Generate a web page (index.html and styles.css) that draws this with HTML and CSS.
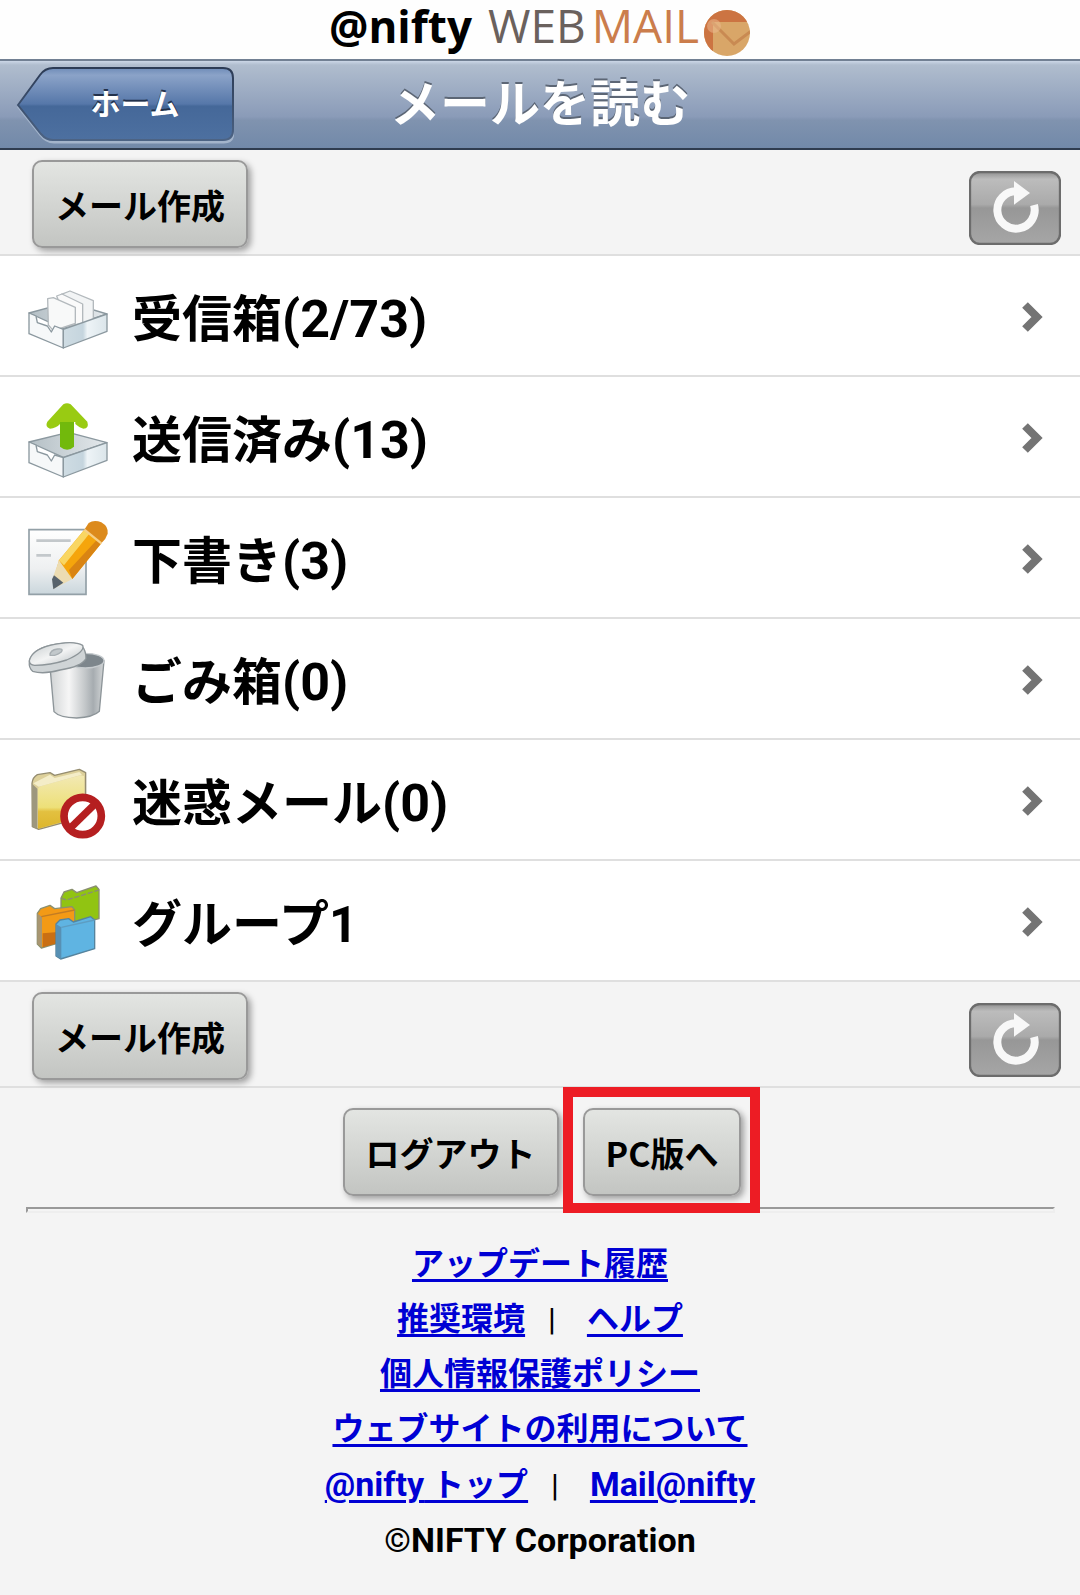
FILE: index.html
```html
<!DOCTYPE html>
<html lang="ja">
<head>
<meta charset="utf-8">
<meta name="viewport" content="width=device-width, initial-scale=1">
<title>メールを読む - @nifty WEBMAIL</title>
<link rel="stylesheet" href="styles.css">
</head>
<body>
<svg class="defs" aria-hidden="true">
  <defs>
    <linearGradient id="home-fill" x1="0" y1="0" x2="0" y2="1">
      <stop offset="0" stop-color="#6f8cb8"/><stop offset=".1" stop-color="#8ba3c8"/><stop offset=".5" stop-color="#5677a9"/><stop offset=".53" stop-color="#456899"/><stop offset="1" stop-color="#4d70a0"/>
    </linearGradient>
    <linearGradient id="home-line" x1="0" y1="0" x2="0" y2="1">
      <stop offset="0" stop-color="#2c3b55"/><stop offset="1" stop-color="#4c6384"/>
    </linearGradient>
    <linearGradient id="tray-side" x1="0" y1="0" x2="1" y2="0">
      <stop offset="0" stop-color="#cfdce3"/><stop offset=".45" stop-color="#c5d5de"/><stop offset=".55" stop-color="#eef4f7"/><stop offset="1" stop-color="#dbe5ea"/>
    </linearGradient>
    <linearGradient id="tray-in" x1="0" y1="0" x2="1" y2="0">
      <stop offset="0" stop-color="#b4bfc5"/><stop offset="1" stop-color="#e4e9ec"/>
    </linearGradient>
    <linearGradient id="sheet" x1="0" y1="0" x2="0" y2="1">
      <stop offset="0" stop-color="#fff"/><stop offset=".6" stop-color="#eef0f1"/><stop offset="1" stop-color="#cad6dc"/>
    </linearGradient>
    <linearGradient id="can" x1="0" y1="0" x2="1" y2="0">
      <stop offset="0" stop-color="#d0d3d4"/><stop offset=".35" stop-color="#f6f6f6"/><stop offset=".65" stop-color="#c3c7c9"/><stop offset=".8" stop-color="#a6acb0"/><stop offset="1" stop-color="#d4d7d8"/>
    </linearGradient>
    <linearGradient id="lid" x1="0" y1="0" x2="1" y2="1">
      <stop offset="0" stop-color="#c4cacc"/><stop offset=".5" stop-color="#f3f4f4"/><stop offset="1" stop-color="#b5bcc0"/>
    </linearGradient>
    <linearGradient id="folder" x1="0" y1="0" x2="0" y2="1">
      <stop offset="0" stop-color="#f2e9b4"/><stop offset=".6" stop-color="#ede078"/><stop offset=".68" stop-color="#e3c040"/><stop offset="1" stop-color="#ddb62c"/>
    </linearGradient>
    <linearGradient id="reload-fill" x1="0" y1="0" x2="0" y2="1">
      <stop offset="0" stop-color="#909090"/><stop offset=".1" stop-color="#bcbcbc"/><stop offset=".45" stop-color="#aaa"/><stop offset=".5" stop-color="#979797"/><stop offset="1" stop-color="#a6a6a6"/>
    </linearGradient>
    <symbol id="chevron" viewBox="0 0 22 34">
      <path d="M3 6 15 18 3 30" fill="none" stroke="#747474" stroke-width="8"/>
    </symbol>
    <symbol id="reload" viewBox="57 66 276 222">
      <rect x="60" y="69" width="270" height="216" rx="30" fill="url(#reload-fill)" stroke="#6c6c6c" stroke-width="7"/>
      <path d="M252 168A56 56 0 1 1 200 127" fill="none" stroke="#f8f8f8" stroke-width="24"/>
      <path d="M192 96 240 132 192 167Z" fill="#f8f8f8"/>
    </symbol>
  </defs>
</svg>

<header>
  <div class="logo">
    <span class="logo-nifty">@nifty</span>
    <span class="logo-web">WEB</span>
    <span class="logo-mail">MAIL</span>
    <svg class="logo-mark" viewBox="0 0 48 48" aria-hidden="true">
      <clipPath id="disc"><circle cx="24" cy="24" r="23"/></clipPath>
      <g clip-path="url(#disc)">
        <path d="M0 0H48V48H0Z" fill="#d9a668"/>
        <path d="M0 0H48V13H10V48H0Z" fill="#cc7442"/>
        <path d="M9 13 31 35 48 22" fill="none" stroke="#c98a52" stroke-width="3"/>
        <circle cx="11" cy="17" r="7" fill="#eebb91" opacity=".5"/>
      </g>
    </svg>
  </div>
  <div class="titlebar">
    <a class="home" href="#">
      <svg class="home-shape" viewBox="0 0 218 78" preserveAspectRatio="none" aria-hidden="true">
        <path d="M2 40 25 69Q30 76 38 76H208Q217 76 217 66" fill="none" stroke="#a3b4cb" stroke-width="3"/>
        <path d="M2 39 24 9Q29 2 37 2H207Q217 2 217 12V64Q217 74 207 74H37Q30 74 25 68Z" fill="url(#home-fill)" stroke="url(#home-line)" stroke-width="2"/>
      </svg>
      <span class="home-text">ホーム</span>
    </a>
    <h1>メールを読む</h1>
  </div>
</header>

<main>
  <div class="toolbar">
    <button class="btn" type="button">メール作成</button>
    <button class="reload" type="button" aria-label="更新"><svg viewBox="0 0 92 74"><use href="#reload" width="92" height="74"/></svg></button>
  </div>

  <ul class="folders">
    <li><a href="#">
      <svg class="icon" viewBox="81 18 240 240" aria-hidden="true">
        <g stroke="#8b989f" stroke-width="4" stroke-linejoin="round">
          <path d="M87 129 205 97 321 132 190 176Z" fill="url(#tray-in)"/>
          <path d="M184 73 210 63 280 92V155L240 165Z" fill="#f2f4f5" stroke="#b3b9bd"/>
          <path d="M170 78 186 72 248 102V160L205 168Z" fill="#fafafa" stroke="#b3b9bd"/>
          <path d="M143 86 160 83 226 112V160L160 182 145 165Z" fill="#f8f9f9" stroke="#b3b9bd"/>
          <path d="M87 129 108 138 112 158 142 168 154 186 164 168 190 178V234L87 191Z" fill="#f6f8f9"/>
          <path d="M190 178 321 132V184L190 234Z" fill="url(#tray-side)"/>
        </g>
      </svg>
      <span class="name">受信箱<span class="count">(2/73)</span></span><svg class="chevron"><use href="#chevron"/></svg></a></li>
    <li><a href="#">
      <svg class="icon" viewBox="81 381 240 240" aria-hidden="true">
        <g stroke="#8b989f" stroke-width="4" stroke-linejoin="round">
          <path d="M87 516 205 487 321 518 190 562Z" fill="url(#tray-in)"/>
          <path d="M180 450H222V530Q202 548 180 530Z" fill="#72b90c" stroke="none"/>
          <path d="M190 403Q201 396 212 403L262 455Q268 475 250 476 240 474 226 462V456H180V462Q168 475 150 476 134 470 142 455Z" fill="#99cb12" stroke="none"/>
          <path d="M87 516 108 525 112 545 142 555 154 573 164 555 190 563V621L87 578Z" fill="#f6f8f9"/>
          <path d="M190 563 321 518V571L190 621Z" fill="url(#tray-side)"/>
        </g>
      </svg>
      <span class="name">送信済み<span class="count">(13)</span></span><svg class="chevron"><use href="#chevron"/></svg></a></li>
    <li><a href="#">
      <svg class="icon" viewBox="81 54 240 240" aria-hidden="true">
        <path d="M87 89H258V283H87Z" fill="url(#sheet)" stroke="#93a0a7" stroke-width="5"/>
        <path d="M109 122H212M109 166H153" stroke="#c3c8cb" stroke-width="8"/>
        <path d="M177 181 253 89 304 130 217 237 165 222Z" fill="#f5a50c"/>
        <path d="M177 181 253 89 268 101 192 196Z" fill="#f9d662"/>
        <path d="M207 210 291 119 304 130 217 237Z" fill="#d98413"/>
        <path d="M253 89 266 69Q282 58 304 67 326 80 323 101 318 117 304 130Z" fill="#dc8a1c"/>
        <path d="M253 89 304 130" stroke="#f6cf86" stroke-width="7"/>
        <path d="M177 181 217 237 160 267 158 235Z" fill="#ecdcb2"/>
        <path d="M162 226 190 248 160 268 156 238Z" fill="#57626c"/>
      </svg>
      <span class="name">下書き<span class="count">(3)</span></span><svg class="chevron"><use href="#chevron"/></svg></a></li>
    <li><a href="#">
      <svg class="icon" viewBox="81 417 240 240" aria-hidden="true">
        <g stroke="#8d9599" stroke-width="4" stroke-linejoin="round">
          <path d="M150 500 162 635Q178 653 230 654 280 652 298 634L312 482Z" fill="url(#can)"/>
          <ellipse cx="256" cy="482" rx="56" ry="22" fill="#7d868c" stroke="#c7cccf"/>
          <path d="M88 485Q95 450 150 436 220 420 245 438 258 450 258 476 245 500 180 510 130 524 98 514 86 504 88 485Z" fill="#cfd4d6"/>
          <path d="M88 482Q95 450 150 436 220 420 248 436 256 456 200 480 150 496 104 496 88 494 88 482Z" fill="url(#lid)"/>
          <path d="M150 466Q150 450 172 447 192 444 184 456 176 462 164 466Z" fill="#c2c8cb" stroke="#a8afb3"/>
        </g>
      </svg>
      <span class="name">ごみ箱<span class="count">(0)</span></span><svg class="chevron"><use href="#chevron"/></svg></a></li>
    <li><a href="#">
      <svg class="icon" viewBox="81 60 240 240" aria-hidden="true">
        <path d="M96 130Q98 112 112 104L150 98 164 106 238 88 257 98V230L116 268 97 260Z" fill="#ddd09a" stroke="#958d70" stroke-width="4" stroke-linejoin="round"/>
        <path d="M114 146Q116 140 124 138L242 106 252 108V228L114 266Z" fill="url(#folder)"/>
        <path d="M97 132 112 146V267L97 260Z" fill="#9d977e"/>
        <path d="M100 130 150 104 164 114 238 96 246 104 116 140Z" fill="#f4edc8"/>
        <circle cx="248" cy="228" r="56" fill="#fff" stroke="#b51f20" stroke-width="23"/>
        <path d="M207 268 289 188" stroke="#b51f20" stroke-width="22"/>
      </svg>
      <span class="name">迷惑メール<span class="count">(0)</span></span><svg class="chevron"><use href="#chevron"/></svg></a></li>
    <li><a href="#">
      <svg class="icon" viewBox="81 423 240 240" aria-hidden="true">
        <g stroke="#8a9070" stroke-width="4" stroke-linejoin="round">
          <path d="M183 474 192 456 216 448 230 458 288 438 297 448V536L198 560 183 548Z" fill="#91c412"/>
          <path d="M183 474 200 480 297 450" fill="none" stroke-dasharray="16 5"/>
          <path d="M112 520 122 506 150 496 164 506 216 500 224 510V594L124 624 112 612Z" fill="#f39a16"/>
          <path d="M128 580 222 572V596L128 622Z" fill="#c96f14" stroke="none"/>
          <path d="M112 520 126 532V622L112 612Z" fill="#a89672" stroke="none"/>
          <path d="M124 530 224 510" fill="none" stroke="#c27c24"/>
          <path d="M168 552 180 540 206 536 220 546 272 530 284 540V626L182 657 168 648Z" fill="#5fb4e2" stroke="#55839d"/>
          <path d="M168 552 184 562V656L168 648Z" fill="#5790b4" stroke="none"/>
          <path d="M184 562 284 540" fill="none" stroke="#5d9dc2"/>
        </g>
      </svg>
      <span class="name">グループ1</span><svg class="chevron"><use href="#chevron"/></svg></a></li>
  </ul>

  <div class="toolbar">
    <button class="btn" type="button">メール作成</button>
    <button class="reload" type="button" aria-label="更新"><svg viewBox="0 0 92 74"><use href="#reload" width="92" height="74"/></svg></button>
  </div>
</main>

<footer>
  <div class="actions">
    <button class="btn" type="button">ログアウト</button>
    <div class="marked"><button class="btn" type="button">PC版へ</button></div>
  </div>
  <hr>
  <nav class="links">
    <div><a href="#">アップデート履歴</a></div>
    <div><a href="#">推奨環境</a><span class="bar">|</span><a href="#">ヘルプ</a></div>
    <div><a href="#">個人情報保護ポリシー</a></div>
    <div><a href="#">ウェブサイトの利用について</a></div>
    <div><a href="#"><span class="latin">@nifty</span> トップ</a><span class="bar">|</span><a class="latin" href="#">Mail@nifty</a></div>
  </nav>
  <p class="copyright latin">©NIFTY Corporation</p>
</footer>
</body>
</html>
```
FILE: styles.css
```css
* { box-sizing: border-box; }

body {
  margin: 0;
  background: #f4f4f4;
  color: #000;
  font-family: Roboto, "Noto Sans CJK JP", sans-serif;
  font-weight: 500;
}

.defs { position: absolute; width: 0; height: 0; }

.logo {
  display: flex;
  justify-content: center;
  align-items: baseline;
  height: 59px;
  background: #fefefe;
  font-family: "Open Sans", sans-serif;
  line-height: 50px;
}
.logo-nifty { font-size: 44px; font-weight: 700; margin-right: 16px; }
.logo-web { font-size: 46px; font-weight: 500; color: #6a615d; margin-right: 6px; }
.logo-mail { font-size: 46px; font-weight: 500; color: #cb7d4c; margin-right: 4px; }
.logo-mark { width: 48px; height: 48px; align-self: flex-end; margin-bottom: 2px; }

.titlebar {
  display: grid;
  grid-template-columns: 1fr auto 1fr;
  align-items: center;
  height: 91px;
  padding: 0 16px;
  border-top: 2px solid #728093;
  border-bottom: 2px solid #2f3c4f;
  background: linear-gradient(#cbd6e6 0, #b0bdce 4px, #8a9bb8 64%, #8093af 68%, #7289a9 100%);
}
.titlebar h1 {
  margin: 0;
  font-size: 50px;
  line-height: 60px;
  font-weight: 700;
  color: #fff;
  text-shadow: 0 -2px 0 #5c6675;
}
.home {
  position: relative;
  display: flex;
  align-items: center;
  justify-content: center;
  width: 218px;
  height: 78px;
  padding-left: 20px;
  color: #fff;
  font-size: 30px;
  font-weight: 700;
  line-height: 40px;
  text-decoration: none;
  text-shadow: 0 -2px 0 #22314b;
}
.home-shape { position: absolute; inset: 0; width: 100%; height: 100%; }
.home-text { position: relative; }

.toolbar {
  display: flex;
  justify-content: space-between;
  align-items: flex-start;
  height: 106px;
  padding: 10px 19px 6px 32px;
  border-bottom: 2px solid #dfdfdf;
}

.btn {
  height: 88px;
  padding: 0 21px;
  border: 2px solid #999;
  border-radius: 10px;
  background: linear-gradient(#e3e5e2, #c3c5c2);
  box-shadow: 3px 3px 6px rgba(0, 0, 0, .35);
  color: #000;
  font-family: "Noto Sans CJK JP", sans-serif;
  font-size: 34px;
  font-weight: 700;
  white-space: nowrap;
}

.reload {
  width: 92px;
  height: 74px;
  margin-top: 11px;
  padding: 0;
  border: 0;
  background: none;
}
.reload svg { display: block; width: 100%; height: 100%; }

.folders { margin: 0; padding: 0; list-style: none; background: #fff; }
.folders a {
  display: flex;
  align-items: center;
  height: 121px;
  padding: 0 36px 0 27px;
  border-bottom: 2px solid #dfdfdf;
  color: #000;
  text-decoration: none;
}
.icon { width: 80px; height: 80px; overflow: visible; }
.name { flex: 1; padding: 8px 0 0 25px; font-size: 50px; line-height: 72px; font-weight: 700; }
.count { font-size: 52px; }
.chevron { width: 22px; height: 34px; }

.actions {
  display: flex;
  justify-content: center;
  gap: 24px;
  padding: 20px 0 0 4px;
}
.marked { position: relative; }
.marked::after {
  content: "";
  position: absolute;
  inset: -21px -19px -17px -20px;
  border: 10px solid #ed1c24;
  pointer-events: none;
}

hr {
  height: 6px;
  margin: 11px 25px 0 26px;
  border: 2px solid;
  border-color: #999 #eee #eee #999;
}

.links, .copyright {
  margin: 0;
  font-size: 32px;
  line-height: 55px;
  font-weight: 700;
  text-align: center;
}
.links { padding-top: 24px; }
.links div { display: flex; justify-content: center; align-items: baseline; }
.links a { color: #0000d4; text-underline-offset: 4px; text-decoration-thickness: 3px; }
.bar { margin: 0 31px 0 23px; font-weight: 400; }
.copyright { padding-bottom: 28px; }
.links .latin, .copyright.latin { font-size: 34px; }
```
